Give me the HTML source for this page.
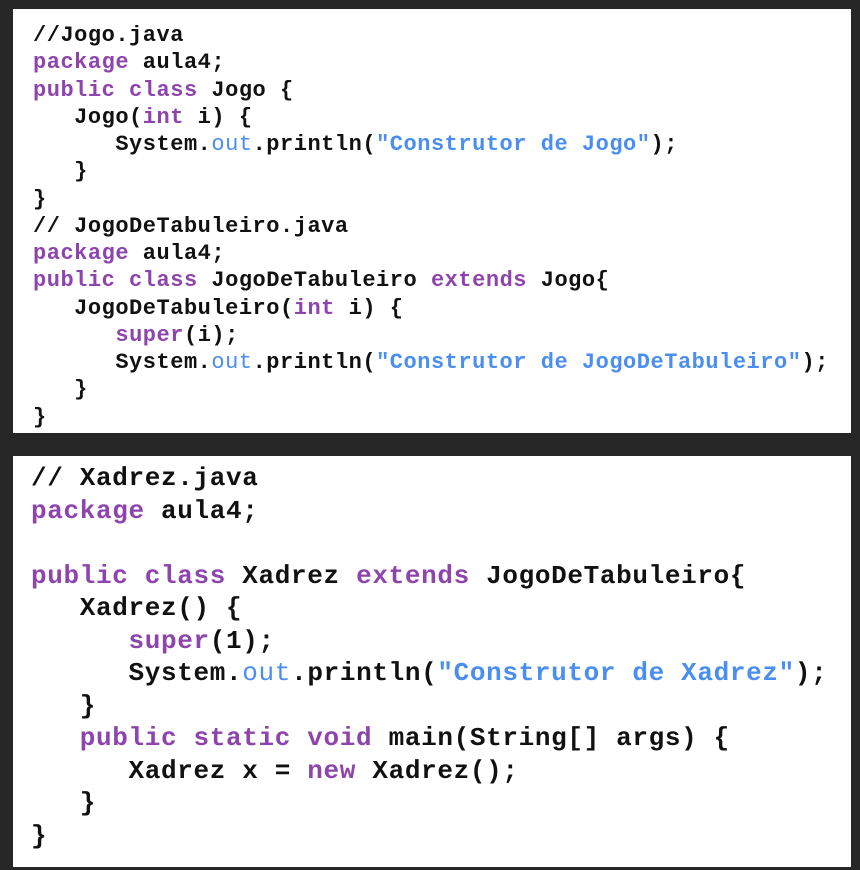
<!DOCTYPE html>
<html><head><style>
html,body{margin:0;padding:0;}
body{width:860px;height:870px;background:#262626;position:relative;overflow:hidden;}
.p{position:absolute;background:#fff;left:13px;width:838px;}
pre{position:absolute;margin:0;font-family:"Liberation Mono",monospace;font-weight:bold;color:#111;}
.a{left:33px;top:22px;font-size:22px;line-height:27.25px;letter-spacing:0.52px;}
.b{left:31px;top:462px;font-size:26px;line-height:32.5px;letter-spacing:0.65px;}
.k{color:#8e44ad;}
.s{color:#4a8ef2;}
.o{color:#4a8ef2;font-weight:normal;}
</style></head><body>
<div class="p" style="top:9px;height:424px"></div>
<div class="p" style="top:456px;height:411px"></div>
<pre class="a">//Jogo.java
<span class="k">package</span> aula4;
<span class="k">public class</span> Jogo {
   Jogo(<span class="k">int</span> i) {
      System.<span class="o">out</span>.println(<span class="s">"Construtor de Jogo"</span>);
   }
}
// JogoDeTabuleiro.java
<span class="k">package</span> aula4;
<span class="k">public class</span> JogoDeTabuleiro <span class="k">extends</span> Jogo{
   JogoDeTabuleiro(<span class="k">int</span> i) {
      <span class="k">super</span>(i);
      System.<span class="o">out</span>.println(<span class="s">"Construtor de JogoDeTabuleiro"</span>);
   }
}</pre>
<pre class="b">// Xadrez.java
<span class="k">package</span> aula4;

<span class="k">public class</span> Xadrez <span class="k">extends</span> JogoDeTabuleiro{
   Xadrez() {
      <span class="k">super</span>(1);
      System.<span class="o">out</span>.println(<span class="s">"Construtor de Xadrez"</span>);
   }
   <span class="k">public static void</span> main(String[] args) {
      Xadrez x = <span class="k">new</span> Xadrez();
   }
}</pre>
</body></html>
